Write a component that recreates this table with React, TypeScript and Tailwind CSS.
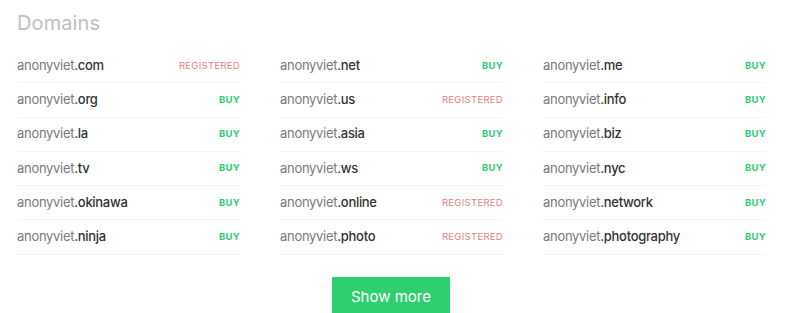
const domains: { tld: string; status: 'buy' | 'registered' }[] = [
  { tld: 'com', status: 'registered' },
  { tld: 'net', status: 'buy' },
  { tld: 'me', status: 'buy' },
  { tld: 'org', status: 'buy' },
  { tld: 'us', status: 'registered' },
  { tld: 'info', status: 'buy' },
  { tld: 'la', status: 'buy' },
  { tld: 'asia', status: 'buy' },
  { tld: 'biz', status: 'buy' },
  { tld: 'tv', status: 'buy' },
  { tld: 'ws', status: 'buy' },
  { tld: 'nyc', status: 'buy' },
  { tld: 'okinawa', status: 'buy' },
  { tld: 'online', status: 'registered' },
  { tld: 'network', status: 'buy' },
  { tld: 'ninja', status: 'buy' },
  { tld: 'photo', status: 'registered' },
  { tld: 'photography', status: 'buy' },
];

export default function App() {
  return (
    <div className="w-[800px] h-[313px] overflow-hidden bg-white px-[17px] font-['Inter',sans-serif]">
      <h2 className="pt-[10px] text-[20px] leading-[26px] text-[#c0c0c0] tracking-[0.1px]">Domains</h2>
      <div className="mt-[13px] grid grid-cols-3 gap-x-[40px] w-[749px]">
        {domains.map((d) => (
          <div
            key={d.tld}
            className="flex items-center justify-between h-[34.25px] border-b border-[#f4f4f4]"
          >
            <span className="text-[13px] tracking-[-0.3px] text-[#7a7a7a]">
              anonyviet<span className="font-medium text-[#333]">.{d.tld}</span>
            </span>
            {d.status === 'buy' ? (
              <span className="text-[9.5px] font-bold tracking-[0.3px] text-[#2ecc71]">BUY</span>
            ) : (
              <span className="text-[9.5px] tracking-[0.3px] text-[#e07f7f]">REGISTERED</span>
            )}
          </div>
        ))}
      </div>
      <div className="flex justify-center mt-[22px] pr-[18px]">
        <button className="w-[118px] h-[42px] bg-[#2ecf6f] text-white text-[15px] flex items-center justify-center">
          Show more
        </button>
      </div>
    </div>
  );
}
